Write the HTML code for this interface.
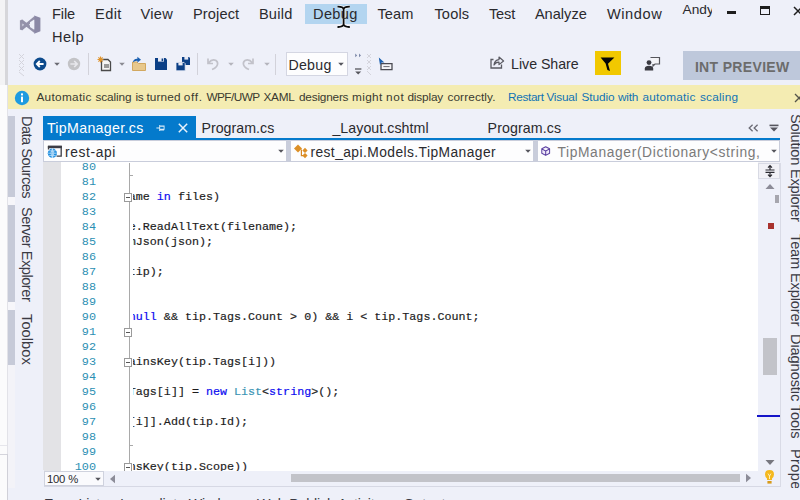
<!DOCTYPE html>
<html lang="en"><head><meta charset="utf-8"><title>TipManager.cs - Visual Studio</title>
<style>
html,body{margin:0;padding:0}
body{width:800px;height:500px;overflow:hidden;position:relative;background:#eef0f9;font-family:'Liberation Sans',sans-serif}
.a{position:absolute}
.tx{position:absolute;white-space:nowrap;line-height:1;margin:0;padding:0}
.v{position:absolute;white-space:nowrap;line-height:1;transform-origin:0 0;transform:rotate(90deg);color:#3a3a44;font-size:14.6px}
.ln{position:absolute;left:62px;width:36px;text-align:right;font-family:'Liberation Mono',monospace;font-size:11.8px;line-height:15px;height:15px;color:#2b8fb3}
.cl{position:absolute;left:0;white-space:pre;font-family:'Liberation Mono',monospace;font-size:11.7px;line-height:15px;height:15px;color:#1c1c1c;-webkit-text-stroke:0.18px currentColor}
.k{color:#0a0af0}.ty{color:#3a94b4}
svg{position:absolute;overflow:visible}
</style></head><body>
<div class="a" style="left:0;top:0;width:7.6px;height:500px;background:#fbfbfc"></div>
<div class="a" style="left:0;top:0;width:5px;height:85px;background:#f3f3f5"></div>
<div class="a" style="left:4.6px;top:0;width:3px;height:85px;background:#d6d6da"></div>
<div class="a" style="left:7px;top:85px;width:0.8px;height:415px;background:#e2e2e8"></div>
<div class="a" style="left:0;top:453.5px;width:7.4px;height:1px;background:#d4d4dc"></div>
<div class="a" style="left:6.8px;top:454px;width:1px;height:46px;background:#d0d0d8"></div>
<div class="a" style="left:0;top:444.5px;width:7.4px;height:1px;background:#e6e6ec"></div>
<!-- title / menu -->
<svg style="left:14px;top:8px" width="36" height="32" viewBox="14 8 36 32"><path d="M21.2 20.2 V29.8" stroke="#9997ad" stroke-width="2.6" fill="none"/><path d="M21 20.6 L35 31.6 M21 29.4 L35 17.6" stroke="#9492aa" stroke-width="3.2" fill="none"/><path d="M34.2 15.4 L40.4 17.8 V31.2 L34.2 33.8 Z" fill="#8b89a6"/><path d="M30 22.2 L34.2 19.4 V29.8 L30 27 Z" fill="#eef0f9"/></svg>
<div class="a" style="left:305px;top:4px;width:62px;height:20px;background:#b3d5f0"></div>
<svg style="left:336px;top:5px" width="16" height="24" viewBox="0 0 16 24"><path d="M1.5 1.6 Q6.8 1.4 7.6 4.2 Q8.4 1.4 13.8 1.6 M7.6 3 V20.6 M1.5 22 Q6.8 22.2 7.6 19.6 Q8.4 22.2 13.8 22" fill="none" stroke="#f4f6fa" stroke-width="3.4"/><path d="M1.5 1.6 Q6.8 1.4 7.6 4.2 Q8.4 1.4 13.8 1.6 M7.6 3 V20.6 M1.5 22 Q6.8 22.2 7.6 19.6 Q8.4 22.2 13.8 22" fill="none" stroke="#0c0c0c" stroke-width="1.8"/></svg>
<!-- account + window buttons -->
<div class="a" style="left:681px;top:0;width:31px;height:24px;overflow:hidden"><div class="tx" style="left:1.6px;top:3.1px;font-size:13.7px;color:#2a2a2e">Andy</div></div>
<div class="a" style="left:727px;top:11px;width:9px;height:3px;background:#1e1e1e"></div>
<div class="a" style="left:760px;top:6px;width:10px;height:9px;box-sizing:border-box;border:1.4px solid #1e1e1e;border-top-width:3px"></div>
<svg style="left:793px;top:6px" width="10" height="10" viewBox="0 0 10 10"><path d="M1 1 L9 9 M9 1 L1 9" stroke="#1e1e1e" stroke-width="1.5" fill="none"/></svg>
<!-- toolbar -->
<svg style="left:17px;top:52px" width="10" height="26" viewBox="0 0 10 26"><path d="M2 2 L7 7 M7 2 L2 7 M2 8 L7 13 M7 8 L2 13 M2 14 L7 19 M7 14 L2 19 M2 20 L7 24" stroke="#d4d4dc" stroke-width="1" fill="none"/></svg>
<svg style="left:33px;top:57px" width="14" height="14" viewBox="0 0 14 14"><circle cx="7" cy="7" r="6.4" fill="#0c4a8c"/><path d="M10.6 7 H4.2 M6.8 4 L3.8 7 L6.8 10" stroke="#fff" stroke-width="1.8" fill="none"/></svg>
<svg style="left:53px;top:62px" width="8" height="5" viewBox="0 0 8 5"><path d="M1.2 0.8 H6.8 L4 3.8 Z" fill="#6a6a72"/></svg>
<svg style="left:67px;top:57px" width="14" height="14" viewBox="0 0 14 14"><circle cx="7" cy="7" r="6.2" fill="#c3c3c6"/><path d="M3.4 7 H9.8 M7.2 4 L10.2 7 L7.2 10" stroke="#e8e8ec" stroke-width="1.6" fill="none"/></svg>
<div class="a" style="left:88px;top:53px;width:1px;height:22px;background:#d2d2da"></div>
<!-- new project -->
<svg style="left:97px;top:56px" width="16" height="16" viewBox="0 0 16 16"><path d="M4.5 3.5 H11 L13.5 6 V14.5 H4.5 Z" fill="#f6f6f6" stroke="#4a4a4a" stroke-width="1.3"/><path d="M7 8 H12 V12 H7 Z" fill="#9a9a9a"/><path d="M3.5 0.5 V6.5 M0.5 3.5 H6.5 M1.4 1.4 L5.6 5.6 M5.6 1.4 L1.4 5.6" stroke="#e0932b" stroke-width="1.1"/></svg>
<svg style="left:118px;top:62px" width="8" height="5" viewBox="0 0 8 5"><path d="M1.2 0.8 H6.8 L4 3.8 Z" fill="#8a8a92"/></svg>
<!-- open -->
<svg style="left:131px;top:56px" width="16" height="16" viewBox="0 0 16 16"><path d="M1.5 6 H6 L7.5 7.5 H14.5 V14.5 H1.5 Z" fill="#e8c88c" stroke="#d2a860" stroke-width="1"/><path d="M2 6.4 Q2.4 2.6 6.4 2.8 V0.8 L10 3.8 L6.4 6.6 V4.8 Q3.6 4.6 2 6.4 Z" fill="#1a5fb0"/></svg>
<!-- save -->
<svg style="left:154px;top:57px" width="14" height="14" viewBox="0 0 14 14"><path d="M1 1 H11.5 L13 2.5 V13 H1 Z" fill="#0b3f86"/><rect x="4" y="1" width="6" height="3.6" fill="#e8eaf4"/><rect x="7.6" y="1.5" width="1.6" height="2.6" fill="#0b3f86"/></svg>
<!-- save all -->
<svg style="left:174px;top:55px" width="17" height="17" viewBox="0 0 17 17"><path d="M8 2 H15 L16 3 V10 H8 Z" fill="#0b3f86"/><rect x="10.4" y="2" width="3.8" height="2.6" fill="#e8eaf4"/><path d="M2 7.4 H10 L11.2 8.6 V15.8 H2 Z" fill="#0b3f86" stroke="#eef0f9" stroke-width="0.8"/><rect x="4.4" y="7.8" width="4.2" height="2.6" fill="#e8eaf4"/></svg>
<div class="a" style="left:197.4px;top:53px;width:1px;height:22px;background:#d2d2da"></div>
<!-- undo / redo (disabled) -->
<svg style="left:206px;top:57px" width="14" height="14" viewBox="0 0 14 14"><path d="M2 1.5 V6.5 H7 M2.5 6 Q6 1.5 10 3.5 Q13 6 10.5 9.5 Q9 11.5 6 12.5" fill="none" stroke="#c2c2ca" stroke-width="1.7"/></svg>
<svg style="left:227px;top:62px" width="8" height="5" viewBox="0 0 8 5"><path d="M1.2 0.8 H6.8 L4 3.8 Z" fill="#b4b4bc"/></svg>
<svg style="left:241px;top:57px" width="14" height="14" viewBox="0 0 14 14"><path d="M12 1.5 V6.5 H7 M11.5 6 Q8 1.5 4 3.5 Q1 6 3.5 9.5 Q5 11.5 8 12.5" fill="none" stroke="#c2c2ca" stroke-width="1.7"/></svg>
<svg style="left:263px;top:62px" width="8" height="5" viewBox="0 0 8 5"><path d="M1.2 0.8 H6.8 L4 3.8 Z" fill="#b4b4bc"/></svg>
<div class="a" style="left:275px;top:54px;width:1px;height:21px;background:#d2d2da"></div>
<!-- config combo -->
<div class="a" style="left:285.5px;top:52px;width:62px;height:24px;box-sizing:border-box;background:#fdfdfe;border:1px solid #d4d6e2"></div>
<svg style="left:337px;top:62px" width="8" height="5" viewBox="0 0 8 5"><path d="M1.2 0.8 H6.8 L4 3.8 Z" fill="#55555c"/></svg>
<!-- overflow -->
<svg style="left:353px;top:52px" width="10" height="26" viewBox="0 0 10 26"><path d="M2.2 1.6 L4.2 3.4 L2.2 5.2 Z M6 1.6 L8 3.4 L6 5.2 Z" fill="#7c88a8"/><path d="M2 17 H8.4" stroke="#55555c" stroke-width="1.3"/><path d="M2.2 19.4 H8.2 L5.2 22.4 Z" fill="#55555c"/></svg>
<svg style="left:365px;top:52px" width="8" height="24" viewBox="0 0 8 24"><path d="M2 2 L6 6 M6 2 L2 6 M2 8 L6 12 M6 8 L2 12 M2 14 L6 18 M6 14 L2 18 M2 19 L6 23" stroke="#d4d4dc" stroke-width="1" fill="none"/></svg>
<svg style="left:378px;top:57px" width="16" height="14" viewBox="0 0 16 14"><path d="M3 6.6 H14 V12.6 H3 Z" fill="#f4f4f8" stroke="#4a4a52" stroke-width="1.3"/><path d="M5.4 9.6 H11.6" stroke="#6a6a72" stroke-width="1"/><path d="M0.8 0.6 L6.4 5.6 L3.6 5.6 L2 8 Z" fill="#1a5fb0"/></svg>
<!-- live share -->
<svg style="left:489px;top:55px" width="16" height="15" viewBox="0 0 16 15"><path d="M4.5 4.5 H2 V13 H12.5 V9.5" fill="none" stroke="#5a5a62" stroke-width="1.3"/><path d="M5 10 Q5.5 5 10 4.6 V2 L14.6 6 L10 9.6 V7.2 Q6.8 7 5 10 Z" fill="none" stroke="#5a5a62" stroke-width="1.2" stroke-linejoin="round"/></svg>
<!-- feedback (yellow) -->
<div class="a" style="left:595px;top:51px;width:26px;height:24px;background:#f1c800"></div>
<svg style="left:595px;top:51px" width="26" height="24" viewBox="0 0 26 24"><path d="M5.6 6.4 H19.4 L13 12.8 L15 20 L12.4 19 L10.6 12.4 Z" fill="#060606"/></svg>
<!-- feedback person -->
<svg style="left:644px;top:56px" width="17" height="16" viewBox="0 0 17 16"><path d="M6.5 1.5 H15.5 V8 H11 L9 10 V8" fill="#f4f4f8" stroke="#55555c" stroke-width="1.2"/><circle cx="5" cy="6.6" r="2.4" fill="#3a3a42"/><path d="M0.8 14.5 V12.5 Q1 9.8 5 9.8 Q9 9.8 9.2 12.5 V14.5 Z" fill="#3a3a42"/></svg>
<!-- INT PREVIEW -->
<div class="a" style="left:683px;top:51px;width:117px;height:29px;background:#bec8db"></div>
<!-- info bar -->
<div class="a" style="left:8px;top:85px;width:792px;height:24px;background:#f4ecb2"></div>
<svg style="left:14px;top:90px" width="16" height="16" viewBox="0 0 16 16"><circle cx="8" cy="8" r="7.2" fill="#1e9be0"/><rect x="7" y="6.6" width="2" height="5.6" fill="#fff"/><rect x="7" y="3.4" width="2" height="2" fill="#fff"/></svg>
<svg style="left:794px;top:93px" width="10" height="10" viewBox="0 0 10 10"><path d="M1 1 L9 9 M9 1 L1 9" stroke="#55554a" stroke-width="1.3" fill="none"/></svg>
<!-- left auto-hide strip -->
<div class="a" style="left:8px;top:116px;width:6.5px;height:81px;background:#c6cad8"></div>
<div class="a" style="left:8px;top:205px;width:6.5px;height:97px;background:#c6cad8"></div>
<div class="a" style="left:8px;top:310px;width:6.5px;height:55px;background:#c6cad8"></div>
<div class="a" style="left:8px;top:197px;width:6.5px;height:8px;background:#f6f6fa"></div>
<div class="a" style="left:8px;top:302px;width:6.5px;height:8px;background:#f6f6fa"></div>
<div class="a" style="left:8px;top:365px;width:6.5px;height:123px;background:#f3f3f8"></div>
<!-- right auto-hide strip -->
<!-- document tabs -->
<div class="a" style="left:42.9px;top:115.8px;width:153px;height:24.4px;background:#047acc"></div>
<div class="a" style="left:42.9px;top:137.9px;width:737.1px;height:2.3px;background:#047acc"></div>
<svg style="left:155.8px;top:124.2px" width="9.2" height="8" viewBox="0 0 12 9" preserveAspectRatio="none"><path d="M0.5 4.5 H4.5 M4.8 1.2 V7.8 M5 2.4 H10.6 V6 H5 M5 6.6 H10.6" fill="none" stroke="#dcecf8" stroke-width="1.2"/></svg>
<svg style="left:178px;top:123px" width="10" height="10" viewBox="0 0 10 10"><path d="M0.8 0.8 L9.2 9.2 M9.2 0.8 L0.8 9.2" stroke="#e8f2fb" stroke-width="1.5" fill="none"/></svg>
<svg style="left:748px;top:124px" width="11" height="8" viewBox="0 0 11 8"><path d="M4.6 0.8 L1.2 4 L4.6 7.2 M9.6 0.8 L6.2 4 L9.6 7.2" fill="none" stroke="#6a6a74" stroke-width="1.3"/></svg>
<svg style="left:769px;top:124px" width="10" height="8" viewBox="0 0 10 8"><path d="M0.5 1.4 H9.5" stroke="#55555e" stroke-width="1.6"/><path d="M1 3.6 H9 L5 7.6 Z" fill="#55555e"/></svg>
<!-- navigation bar -->
<div class="a" style="left:43.2px;top:140.2px;width:736.8px;height:22.1px;background:#c9cddb"></div>
<div class="a" style="left:44.2px;top:141px;width:242px;height:20.4px;background:#fdfdfe"></div>
<div class="a" style="left:291px;top:141px;width:241.8px;height:20.4px;background:#fdfdfe"></div>
<div class="a" style="left:537.6px;top:141px;width:241.6px;height:20.4px;background:#fdfdfe"></div>
<svg style="left:277px;top:149px" width="8" height="5" viewBox="0 0 8 5"><path d="M1.2 0.8 H6.8 L4 3.8 Z" fill="#55555c"/></svg>
<svg style="left:524px;top:149px" width="8" height="5" viewBox="0 0 8 5"><path d="M1.2 0.8 H6.8 L4 3.8 Z" fill="#55555c"/></svg>
<svg style="left:770px;top:149px" width="8" height="5" viewBox="0 0 8 5"><path d="M1.2 0.8 H6.8 L4 3.8 Z" fill="#55555c"/></svg>
<!-- project icon -->
<svg style="left:47px;top:145px" width="16" height="14" viewBox="0 0 16 14"><path d="M1.5 4.6 V1.4 H14.2 V11.2 H9.6" fill="none" stroke="#3c3c44" stroke-width="1.3"/><path d="M0.9 2 H14.8" stroke="#3c3c44" stroke-width="2.4"/><circle cx="5.4" cy="8.2" r="4.6" fill="#1f8fe0"/><path d="M0.9 8.2 H9.9 M5.4 3.6 V12.8 M2 5.6 Q5.4 6.9 8.8 5.6 M2 10.8 Q5.4 9.5 8.8 10.8 M5.4 3.6 Q2.4 8.2 5.4 12.8 M5.4 3.6 Q8.4 8.2 5.4 12.8" stroke="#cfe6fa" stroke-width="0.7" fill="none"/></svg>
<!-- class icon -->
<svg style="left:293px;top:144px" width="16" height="15" viewBox="0 0 16 15"><path d="M5 0.6 L9 4.5 L5 8.4 L1 4.5 Z" fill="#dc8f26"/><path d="M8.4 5.6 V11.6 H11" fill="none" stroke="#d68622" stroke-width="1.2"/><path d="M12 3.8 L14.6 6.4 L12 9 L9.4 6.4 Z" fill="#dc8f26"/><path d="M12 9 L14.6 11.6 L12 14.2 L9.4 11.6 Z" fill="#dc8f26"/></svg>
<!-- method icon -->
<svg style="left:540.8px;top:146.2px" width="9.4" height="10.2" viewBox="0 0 12 13"><path d="M6 1 L11 3.6 V9.2 L6 12 L1 9.2 V3.6 Z M1 3.6 L6 6.4 L11 3.6 M6 6.4 V12" fill="#f0eafa" stroke="#5a3fa0" stroke-width="1.3" stroke-linejoin="round"/></svg>
<!-- editor -->
<div class="a" style="left:43.2px;top:162.3px;width:736.8px;height:1px;background:#ffffff"></div>
<div class="a" style="left:43.2px;top:162.3px;width:17.8px;height:308.2px;background:#e3e3e6"></div>
<div class="a" style="left:758.3px;top:162.3px;width:21.7px;height:1px;background:#f1f1f6"></div>
<div class="a" style="left:43.5px;top:163px;width:736.5px;height:307.5px;background:#ffffff;overflow:hidden">
<div class="a" style="left:0;top:0;width:17.5px;height:308px;background:#e3e3e6"></div>
<div class="ln" style="left:16.5px;top:-3.2px">80</div>
<div class="ln" style="left:16.5px;top:11.8px">81</div>
<div class="ln" style="left:16.5px;top:26.8px">82</div>
<div class="ln" style="left:16.5px;top:41.8px">83</div>
<div class="ln" style="left:16.5px;top:56.8px">84</div>
<div class="ln" style="left:16.5px;top:71.8px">85</div>
<div class="ln" style="left:16.5px;top:86.8px">86</div>
<div class="ln" style="left:16.5px;top:101.8px">87</div>
<div class="ln" style="left:16.5px;top:116.8px">88</div>
<div class="ln" style="left:16.5px;top:131.8px">89</div>
<div class="ln" style="left:16.5px;top:146.8px">90</div>
<div class="ln" style="left:16.5px;top:161.8px">91</div>
<div class="ln" style="left:16.5px;top:176.8px">92</div>
<div class="ln" style="left:16.5px;top:191.8px">93</div>
<div class="ln" style="left:16.5px;top:206.8px">94</div>
<div class="ln" style="left:16.5px;top:221.8px">95</div>
<div class="ln" style="left:16.5px;top:236.8px">96</div>
<div class="ln" style="left:16.5px;top:251.8px">97</div>
<div class="ln" style="left:16.5px;top:266.8px">98</div>
<div class="ln" style="left:16.5px;top:281.8px">99</div>
<div class="ln" style="left:16.5px;top:296.8px">100</div>
<div class="a" style="left:85.2px;top:0;width:1px;height:308px;background:#a9a9a9"></div>
<div class="a" style="left:85.2px;top:11.5px;width:4.5px;height:1px;background:#a9a9a9"></div>
<div class="a" style="left:85.2px;top:281.5px;width:4.5px;height:1px;background:#a9a9a9"></div>
<div class="a" style="left:80.4px;top:29.5px;width:8.5px;height:9px;box-sizing:border-box;border:1px solid #9a9a9a;background:#fff"><div class="a" style="left:1.5px;top:3px;width:4px;height:1px;background:#555"></div></div>
<div class="a" style="left:80.4px;top:164.5px;width:8.5px;height:9px;box-sizing:border-box;border:1px solid #9a9a9a;background:#fff"><div class="a" style="left:1.5px;top:3px;width:4px;height:1px;background:#555"></div></div>
<div class="a" style="left:80.4px;top:194.5px;width:8.5px;height:9px;box-sizing:border-box;border:1px solid #9a9a9a;background:#fff"><div class="a" style="left:1.5px;top:3px;width:4px;height:1px;background:#555"></div></div>
<div class="a" style="left:80.4px;top:299.5px;width:8.5px;height:9px;box-sizing:border-box;border:1px solid #9a9a9a;background:#fff"><div class="a" style="left:1.5px;top:3px;width:4px;height:1px;background:#555"></div></div>
<div class="a" style="left:89.7px;top:0;width:625.8px;height:308px;overflow:hidden">
<div class="cl" style="left:-4.4px;top:26.8px">ame <span class="k">in</span> files)</div>
<div class="cl" style="left:-4.4px;top:56.8px">e.ReadAllText(filename);</div>
<div class="cl" style="left:-4.4px;top:71.8px">mJson(json);</div>
<div class="cl" style="left:-4.4px;top:101.8px">tip);</div>
<div class="cl" style="left:-4.4px;top:146.8px"><span class="k">null</span> &amp;&amp; tip.Tags.Count &gt; 0) &amp;&amp; i &lt; tip.Tags.Count;</div>
<div class="cl" style="left:-4.4px;top:191.8px">ainsKey(tip.Tags[i]))</div>
<div class="cl" style="left:-4.4px;top:221.8px">Tags[i]] = <span class="k">new</span> <span class="ty">List</span>&lt;<span class="k">string</span>&gt;();</div>
<div class="cl" style="left:-4.4px;top:251.8px">[i]].Add(tip.Id);</div>
<div class="cl" style="left:-4.4px;top:296.8px">nsKey(tip.Scope))</div>
</div>
<div class="a" style="left:714.8px;top:0;width:21.7px;height:308px;background:#eef0f9"></div>
<div class="a" style="left:714.8px;top:0;width:21.7px;height:15.5px;box-sizing:border-box;background:#f1f1f6;border:1px solid #d8dae4"></div>
<svg style="left:720px;top:2px" width="12" height="12" viewBox="0 0 12 12"><path d="M1.5 5 H10.5 M1.5 7.4 H10.5 M6 0.6 V4.6 M6 7.8 V11.6 M4 2.6 L6 0.6 L8 2.6 M4 9.6 L6 11.6 L8 9.6" fill="none" stroke="#2a2a30" stroke-width="1.2"/></svg>
<svg style="left:721px;top:20px" width="10" height="7" viewBox="0 0 10 7"><path d="M0.5 6 H9.5 L5 1 Z" fill="#8c8c98"/></svg>
<svg style="left:721px;top:296px" width="10" height="7" viewBox="0 0 10 7"><path d="M0.5 1 H9.5 L5 6 Z" fill="#77777f"/></svg>
<div class="a" style="left:731.5px;top:32px;width:4px;height:8px;background:#a6a6ae"></div>
<div class="a" style="left:724.5px;top:60px;width:5.5px;height:6px;background:#a8322e"></div>
<div class="a" style="left:719px;top:175px;width:14px;height:36.5px;background:#c2c3c9"></div>
<div class="a" style="left:713.5px;top:252px;width:23px;height:1.8px;background:#1414c8"></div>
</div>
<div class="a" style="left:779.5px;top:163px;width:1px;height:324px;background:#d9dbe6"></div>
<!-- bottom: zoom + horizontal scrollbar -->
<div class="a" style="left:43.5px;top:470.5px;width:736.5px;height:16px;background:#eef0f9"></div>
<div class="a" style="left:44px;top:471px;width:60px;height:15px;box-sizing:border-box;background:#fafafd;border:1px solid #cfd2de"></div>
<svg style="left:94px;top:477px" width="8" height="5" viewBox="0 0 8 5"><path d="M1.2 0.8 H6.8 L4 3.8 Z" fill="#55555c"/></svg>
<svg style="left:109px;top:474px" width="7" height="10" viewBox="0 0 7 10"><path d="M6 0.8 V9.2 L1 5 Z" fill="#8c8c98"/></svg>
<svg style="left:745px;top:473px" width="7" height="10" viewBox="0 0 7 10"><path d="M1 0.8 V9.2 L6 5 Z" fill="#8c8c98"/></svg>
<div class="a" style="left:291px;top:473.7px;width:448.5px;height:8.8px;background:#c2c3c9"></div>
<svg style="left:764px;top:469px" width="11" height="16" viewBox="0 0 11 16"><path d="M5.5 1 Q10 1 10 5.4 Q10 7.6 8 9.4 V11 H3 V9.4 Q1 7.6 1 5.4 Q1 1 5.5 1 Z" fill="#f4b81e"/><path d="M3.4 12 H7.6 V14.6 H3.4 Z" fill="#d89a18"/><path d="M4 4.6 L5.5 7 L7 4.6 M5.5 7 V10" stroke="#fff4c8" stroke-width="0.9" fill="none"/></svg>
<div class="a" style="left:43.5px;top:486.3px;width:736.5px;height:1px;background:#d6d8e4"></div>
<!-- bottom tool window tabs (cut off by window edge) -->
<div class="tx" style="left:44.0px;top:496.5px;font-size:14.2px;color:#3a3a44;letter-spacing:-0.15px">Error List</div>
<div class="tx" style="left:120.0px;top:496.5px;font-size:14.2px;color:#3a3a44;letter-spacing:-0.15px">Immediate Window</div>
<div class="tx" style="left:257.0px;top:496.5px;font-size:14.2px;color:#3a3a44;letter-spacing:-0.15px">Web Publish Activity</div>
<div class="tx" style="left:403.5px;top:496.5px;font-size:14.2px;color:#3a3a44;letter-spacing:-0.15px">Output</div>

<div class="tx" style="left:51.90px;top:6.88px;font-size:14.60px;color:#2a2a2e;font-family:'Liberation Sans',sans-serif;letter-spacing:-0.079px;">File</div>
<div class="tx" style="left:95.10px;top:6.88px;font-size:14.60px;color:#2a2a2e;font-family:'Liberation Sans',sans-serif;letter-spacing:0.386px;">Edit</div>
<div class="tx" style="left:140.60px;top:6.88px;font-size:14.60px;color:#2a2a2e;font-family:'Liberation Sans',sans-serif;letter-spacing:0.281px;">View</div>
<div class="tx" style="left:192.90px;top:6.88px;font-size:14.60px;color:#2a2a2e;font-family:'Liberation Sans',sans-serif;letter-spacing:0.140px;">Project</div>
<div class="tx" style="left:258.90px;top:6.88px;font-size:14.60px;color:#2a2a2e;font-family:'Liberation Sans',sans-serif;letter-spacing:0.249px;">Build</div>
<div class="tx" style="left:313.10px;top:6.88px;font-size:14.60px;color:#2a2a2e;font-family:'Liberation Sans',sans-serif;letter-spacing:0.297px;">Debug</div>
<div class="tx" style="left:377.40px;top:6.88px;font-size:14.60px;color:#2a2a2e;font-family:'Liberation Sans',sans-serif;letter-spacing:0.128px;">Team</div>
<div class="tx" style="left:434.40px;top:6.88px;font-size:14.60px;color:#2a2a2e;font-family:'Liberation Sans',sans-serif;letter-spacing:0.164px;">Tools</div>
<div class="tx" style="left:488.90px;top:6.88px;font-size:14.60px;color:#2a2a2e;font-family:'Liberation Sans',sans-serif;letter-spacing:-0.141px;">Test</div>
<div class="tx" style="left:534.90px;top:6.88px;font-size:14.60px;color:#2a2a2e;font-family:'Liberation Sans',sans-serif;letter-spacing:-0.003px;">Analyze</div>
<div class="tx" style="left:606.90px;top:6.88px;font-size:14.60px;color:#2a2a2e;font-family:'Liberation Sans',sans-serif;letter-spacing:0.582px;">Window</div>
<div class="tx" style="left:51.90px;top:30.38px;font-size:14.60px;color:#2a2a2e;font-family:'Liberation Sans',sans-serif;letter-spacing:0.596px;">Help</div>
<div class="tx" style="left:288.40px;top:57.51px;font-size:14.20px;color:#2a2a2e;font-family:'Liberation Sans',sans-serif;letter-spacing:0.278px;">Debug</div>
<div class="tx" style="left:511.10px;top:57.01px;font-size:14.20px;color:#2a2a2e;font-family:'Liberation Sans',sans-serif;letter-spacing:-0.033px;">Live Share</div>
<div class="tx" style="left:694.90px;top:59.68px;font-size:14.00px;color:#6c6c6c;font-family:'Liberation Sans',sans-serif;letter-spacing:0.335px;font-weight:bold;">INT PREVIEW</div>
<div class="a" style="left:0;top:0"><span class="tx" style="left:36.40px;top:92.21px;font-size:11.80px;color:#3a3a30;font-family:'Liberation Sans',sans-serif;letter-spacing:0.305px;">Automatic</span> <span class="tx" style="left:95.40px;top:92.21px;font-size:11.80px;color:#3a3a30;font-family:'Liberation Sans',sans-serif;letter-spacing:-0.076px;">scaling</span> <span class="tx" style="left:135.40px;top:92.21px;font-size:11.80px;color:#3a3a30;font-family:'Liberation Sans',sans-serif;letter-spacing:-0.166px;">is</span> <span class="tx" style="left:146.40px;top:92.21px;font-size:11.80px;color:#3a3a30;font-family:'Liberation Sans',sans-serif;letter-spacing:0.124px;">turned</span> <span class="tx" style="left:183.80px;top:92.21px;font-size:11.80px;color:#3a3a30;font-family:'Liberation Sans',sans-serif;letter-spacing:0.653px;">off.</span> <span class="tx" style="left:206.40px;top:92.21px;font-size:11.80px;color:#3a3a30;font-family:'Liberation Sans',sans-serif;letter-spacing:-0.545px;">WPF/UWP</span> <span class="tx" style="left:263.40px;top:92.21px;font-size:11.80px;color:#3a3a30;font-family:'Liberation Sans',sans-serif;letter-spacing:-0.231px;">XAML</span> <span class="tx" style="left:299.00px;top:92.21px;font-size:11.80px;color:#3a3a30;font-family:'Liberation Sans',sans-serif;letter-spacing:-0.206px;">designers</span> <span class="tx" style="left:352.00px;top:92.21px;font-size:11.80px;color:#3a3a30;font-family:'Liberation Sans',sans-serif;letter-spacing:0.348px;">might</span> <span class="tx" style="left:386.10px;top:92.21px;font-size:11.80px;color:#3a3a30;font-family:'Liberation Sans',sans-serif;letter-spacing:0.698px;">not</span> <span class="tx" style="left:407.40px;top:92.21px;font-size:11.80px;color:#3a3a30;font-family:'Liberation Sans',sans-serif;letter-spacing:-0.148px;">display</span> <span class="tx" style="left:447.40px;top:92.21px;font-size:11.80px;color:#3a3a30;font-family:'Liberation Sans',sans-serif;letter-spacing:0.122px;">correctly.</span></div>
<div class="a" style="left:0;top:0"><span class="tx" style="left:508.10px;top:92.21px;font-size:11.80px;color:#1173b5;font-family:'Liberation Sans',sans-serif;letter-spacing:-0.362px;">Restart</span> <span class="tx" style="left:546.40px;top:92.21px;font-size:11.80px;color:#1173b5;font-family:'Liberation Sans',sans-serif;letter-spacing:-0.204px;">Visual</span> <span class="tx" style="left:581.40px;top:92.21px;font-size:11.80px;color:#1173b5;font-family:'Liberation Sans',sans-serif;letter-spacing:-0.042px;">Studio</span> <span class="tx" style="left:618.10px;top:92.21px;font-size:11.80px;color:#1173b5;font-family:'Liberation Sans',sans-serif;letter-spacing:-0.246px;">with</span> <span class="tx" style="left:642.40px;top:92.21px;font-size:11.80px;color:#1173b5;font-family:'Liberation Sans',sans-serif;letter-spacing:0.227px;">automatic</span> <span class="tx" style="left:700.00px;top:92.21px;font-size:11.80px;color:#1173b5;font-family:'Liberation Sans',sans-serif;letter-spacing:0.224px;">scaling</span></div>
<div class="tx" style="left:46.90px;top:121.21px;font-size:14.20px;color:#ffffff;font-family:'Liberation Sans',sans-serif;letter-spacing:0.321px;">TipManager.cs</div>
<div class="tx" style="left:201.40px;top:121.21px;font-size:14.20px;color:#2a2a2e;font-family:'Liberation Sans',sans-serif;letter-spacing:0.037px;">Program.cs</div>
<div class="tx" style="left:332.40px;top:121.21px;font-size:14.20px;color:#2a2a2e;font-family:'Liberation Sans',sans-serif;letter-spacing:0.056px;">_Layout.cshtml</div>
<div class="tx" style="left:487.60px;top:121.21px;font-size:14.20px;color:#2a2a2e;font-family:'Liberation Sans',sans-serif;letter-spacing:0.097px;">Program.cs</div>
<div class="tx" style="left:64.90px;top:145.75px;font-size:13.80px;color:#2a2a2e;font-family:'Liberation Sans',sans-serif;letter-spacing:0.648px;">rest-api</div>
<div class="tx" style="left:310.40px;top:145.75px;font-size:13.80px;color:#2a2a2e;font-family:'Liberation Sans',sans-serif;letter-spacing:0.437px;">rest_api.Models.TipManager</div>
<div class="tx" style="left:557.40px;top:145.75px;font-size:13.80px;color:#7a7a7a;font-family:'Liberation Sans',sans-serif;letter-spacing:0.639px;">TipManager(Dictionary&lt;string,</div>
<div class="tx" style="left:46.90px;top:473.82px;font-size:11.30px;color:#2a2a2e;font-family:'Liberation Sans',sans-serif;letter-spacing:-0.169px;">100 %</div>
<div class="v" style="left:33.6px;top:115.70px;letter-spacing:-0.535px;">Data Sources</div>
<div class="v" style="left:33.6px;top:207.10px;letter-spacing:-0.473px;">Server Explorer</div>
<div class="v" style="left:33.6px;top:313.50px;letter-spacing:0.084px;">Toolbox</div>
<div class="v" style="left:802.6px;top:114.10px;letter-spacing:-0.208px;">Solution Explorer</div>
<div class="v" style="left:802.6px;top:234.10px;letter-spacing:-0.146px;">Team Explorer</div>
<div class="v" style="left:802.6px;top:333.50px;letter-spacing:-0.100px;">Diagnostic Tools</div>
<div class="v" style="left:802.6px;top:448.70px;letter-spacing:0.348px;">Properties</div>
<div class="a" style="left:781px;top:488px;width:19px;height:12px;background:#eef0f9"></div>
</body></html>
